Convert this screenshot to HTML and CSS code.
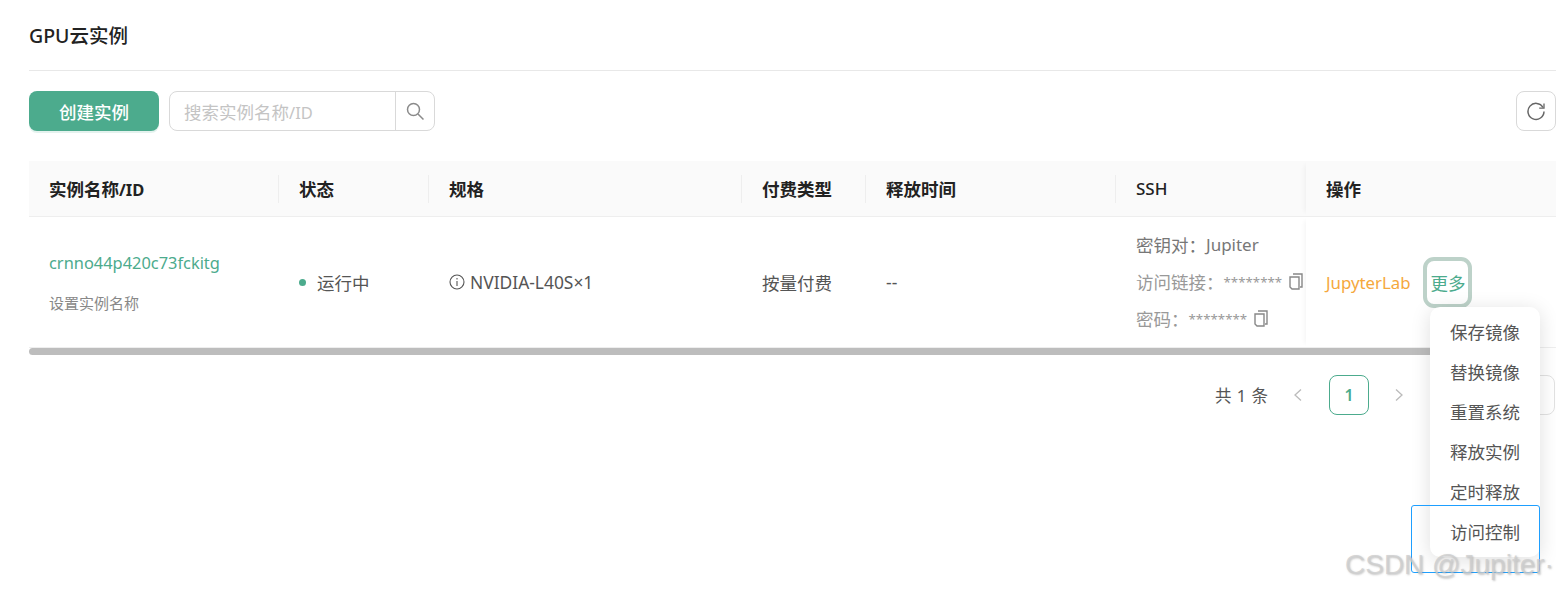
FILE: index.html
```html
<!DOCTYPE html>
<html lang="zh-CN">
<head>
<meta charset="utf-8">
<title>GPU云实例</title>
<link rel="stylesheet" href="styles.css">
</head>
<body>
<main class="page">
  <h1 class="title">GPU云实例</h1>
  <div class="toolbar">
    <button class="create">创建实例</button>
    <div class="search">
      <span class="placeholder">搜索实例名称<span class="latin">/ID</span></span>
      <span class="search-btn">
        <svg width="20" height="20" viewBox="0 0 20 20" fill="none" stroke="#8a8a8a" stroke-width="1.5"><circle cx="8.5" cy="8.5" r="6"/><path d="M13 13l5.5 5.5"/></svg>
      </span>
    </div>
    <button class="refresh">
      <svg width="20" height="20" viewBox="0 0 20 20" fill="none" stroke="#666" stroke-width="1.5"><path d="M17 6.5A8 8 0 1 0 18 10.5"/><path d="M18 2.4v4.8h-4.8" stroke-width="1.3"/></svg>
    </button>
  </div>

  <div class="table">
    <div class="row head">
      <div class="th"><span>实例名称<span class="latin">/ID</span></span></div>
      <div class="th">状态</div>
      <div class="th">规格</div>
      <div class="th">付费类型</div>
      <div class="th">释放时间</div>
      <div class="th"><span class="latin-head">SSH</span></div>
      <div class="th op">操作</div>
    </div>
    <div class="row body">
      <div class="td name">
        <a class="link">crnno44p420c73fckitg</a>
        <span class="sub">设置实例名称</span>
      </div>
      <div class="td"><i class="dot"></i>运行中</div>
      <div class="td spec">
        <svg width="16" height="16" viewBox="0 0 16 16" fill="none" stroke="#555" stroke-width="1.1"><circle cx="8" cy="8" r="7"/><path d="M8 7v5M8 4v1.4"/></svg>
        <span class="gpu">NVIDIA-L40S×1</span>
      </div>
      <div class="td">按量付费</div>
      <div class="td">--</div>
      <div class="td ssh">
        <div class="key">密钥对：<span class="latin-key">Jupiter</span></div>
        <div>访问链接：<span class="mask">********</span><svg class="copy" width="14" height="17" viewBox="0 0 14 17" fill="none" stroke="#888" stroke-width="1.4"><path d="M4 1h9v13h-2M1 4h9v12H3l-2-2z"/></svg></div>
        <div>密码：<span class="mask">********</span><svg class="copy" width="14" height="17" viewBox="0 0 14 17" fill="none" stroke="#888" stroke-width="1.4"><path d="M4 1h9v13h-2M1 4h9v12H3l-2-2z"/></svg></div>
      </div>
      <div class="td op actions">
        <a class="jupyter">JupyterLab</a>
        <span class="more">更多</span>
      </div>
    </div>
    <div class="scrollbar"></div>
  </div>

  <div class="pager">
    <span class="total">共 1 条</span>
    <svg class="arrow" width="10" height="14" viewBox="0 0 10 14" fill="none" stroke="#bbb" stroke-width="1.3"><path d="M8 1.5L2 7l6 5.5"/></svg>
    <span class="current">1</span>
    <svg class="arrow" width="10" height="14" viewBox="0 0 10 14" fill="none" stroke="#bbb" stroke-width="1.3"><path d="M2 1.5L8 7l-6 5.5"/></svg>
    <span class="size"></span>
  </div>
</main>

<ul class="menu">
  <li>保存镜像</li>
  <li>替换镜像</li>
  <li>重置系统</li>
  <li>释放实例</li>
  <li>定时释放</li>
  <li>访问控制</li>
</ul>
<div class="highlight"></div>
<div class="watermark">CSDN @Jupiter·</div>
</body>
</html>
```
FILE: styles.css
```css
* { box-sizing: border-box; }
html, body { margin: 0; height: 100%; overflow: hidden; background: #fff; }
body {
  position: relative;
  font-family: "Noto Sans", "Noto Sans CJK SC", sans-serif;
  font-size: 17.5px;
  color: #555;
}
.page { padding-left: 29px; }
.title {
  margin: 0;
  height: 71px;
  padding-top: 22px;
  font-size: 19.5px;
  line-height: 28px;
  font-weight: 500;
  color: #222;
  border-bottom: 1px solid #e8e8e8;
}
.toolbar {
  display: flex;
  align-items: center;
  height: 40px;
  margin-top: 20px;
}
.create {
  width: 130px;
  height: 40px;
  border: 0;
  border-radius: 8px;
  background: #4cab8d;
  color: #fff;
  font: 500 17.5px "Noto Sans", "Noto Sans CJK SC", sans-serif;
  box-shadow: 0 2px 0 rgba(76, 171, 141, .15);
}
.search {
  display: flex;
  width: 266px;
  height: 40px;
  margin-left: 10px;
  border: 1px solid #d9d9d9;
  border-radius: 8px;
}
.placeholder {
  flex: 1;
  padding-left: 14px;
  line-height: 40px;
  color: #c4c4c4;
}
.latin { font-size: 16.5px; }
.search-btn {
  display: flex;
  align-items: center;
  justify-content: center;
  width: 39px;
  border-left: 1px solid #d9d9d9;
}
.refresh {
  display: flex;
  align-items: center;
  justify-content: center;
  width: 40px;
  height: 40px;
  margin-left: auto;
  padding: 0;
  background: #fff;
  border: 1px solid #d9d9d9;
  border-radius: 8px;
}
.table { margin-top: 30px; }
.row {
  display: grid;
  grid-template-columns: 250px 150px 313px 124px 250px 190px 250px;
}
.head {
  height: 56px;
  background: #fafafa;
  border-bottom: 1px solid #eee;
}
.th {
  position: relative;
  display: flex;
  align-items: center;
  padding-left: 20px;
  font-weight: 700;
  color: #222;
}
.latin-head { font-size: 17px; font-weight: 500; }
.th + .th::before {
  content: "";
  position: absolute;
  left: -1px;
  top: 14px;
  height: 28px;
  width: 1px;
  background: #eee;
}
.th.op::before { display: none; }
.th.op { box-shadow: -5px 0 5px -4px rgba(0, 0, 0, .05); }
.td.op { box-shadow: -5px 0 5px -4px rgba(0, 0, 0, .05); }
.body { height: 131px; border-bottom: 1px solid #eee; }
.td {
  display: flex;
  align-items: center;
  padding-left: 20px;
  color: #555;
}
.name {
  flex-direction: column;
  align-items: flex-start;
  justify-content: center;
  padding-left: 20px;
}
.link { color: #4cab8d; font-size: 16.4px; line-height: 24px; }
.sub { margin-top: 18px; font-size: 15px; line-height: 20px; color: #888; }
.dot {
  width: 7px;
  height: 7px;
  margin-right: 11px;
  border-radius: 50%;
  background: #4cab8d;
}
.spec svg { margin-right: 5px; }
.gpu { font-size: 17.4px; }
.ssh {
  flex-direction: column;
  align-items: flex-start;
  justify-content: center;
  gap: 13px;
  padding-bottom: 1px;
  color: #999;
  white-space: nowrap;
}
.ssh > div { display: flex; align-items: center; height: 24px; line-height: 24px; }
.key { color: #777; }
.latin-key { font-size: 17px; }
.mask { font-size: 13.3px; }
.copy { margin-left: 7px; }
.actions { background: #fff; }
.jupyter { color: #f5a83d; font-size: 16.8px; }
.more {
  display: flex;
  align-items: center;
  justify-content: center;
  width: 49px;
  height: 51px;
  margin-left: 13px;
  color: #4cab8d;
  border: 4px solid #bdd2c9;
  border-radius: 11px;
}
.scrollbar {
  height: 7px;
  margin-right: 56px;
  border-radius: 4px 0 0 4px;
  background: #bdbdbd;
}
.pager {
  display: flex;
  align-items: center;
  height: 40px;
  margin-top: 20px;
  padding-left: 1186px;
  padding-right: 1px;
}
.total { width: 53px; font-size: 16.5px; word-spacing: 1px; white-space: nowrap; color: #555; }
.arrow { margin: 0 25px; }
.current {
  display: flex;
  align-items: center;
  justify-content: center;
  width: 40px;
  height: 40px;
  margin-left: 1px;
  border: 1px solid #4cab8d;
  border-radius: 8px;
  color: #4cab8d;
  font-size: 16px;
  font-weight: 600;
}
.size {
  flex: 1;
  height: 40px;
  margin-left: 60px;
  border: 1px solid #e2e2e2;
  border-radius: 8px;
}
.menu {
  position: absolute;
  left: 1430px;
  top: 307px;
  width: 110px;
  height: 250px;
  margin: 0;
  padding: 5px 0;
  list-style: none;
  background: #fff;
  border-radius: 10px;
  box-shadow: 0 3px 20px rgba(0, 0, 0, .13);
}
.menu li {
  height: 40px;
  line-height: 40px;
  text-align: center;
  color: #555;
}
.highlight {
  position: absolute;
  left: 1411px;
  top: 505px;
  width: 129px;
  height: 68px;
  border: 1px solid #1e9fff;
  border-radius: 3px;
}
.watermark {
  position: absolute;
  left: 1345px;
  top: 546px;
  font: 28px/38px "Liberation Sans", sans-serif;
  color: rgba(205, 205, 205, .8);
  text-shadow: 1px 1px 2px rgba(120, 120, 120, .4);
  white-space: nowrap;
}
```
